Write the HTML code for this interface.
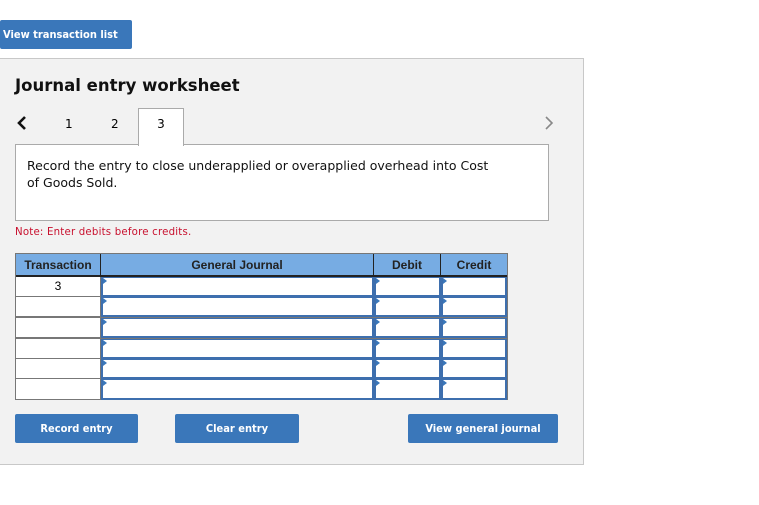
<!DOCTYPE html>
<html><head><style>
*{margin:0;padding:0;box-sizing:border-box}
body{width:759px;height:505px;background:#fff;font-family:"DejaVu Sans",Verdana,sans-serif;position:relative;overflow:hidden}
.a{position:absolute}
.btn{position:absolute;background:#3a77ba;color:#fff;font-weight:bold;font-size:11px;border-radius:2px;text-align:center;font-family:"DejaVu Sans Condensed","DejaVu Sans",sans-serif}
.cell{position:absolute;background:#fff}
.inp{position:absolute;background:#fff;border:2px solid #3e6fae;border-top-width:1px}
.inp:before{content:"";position:absolute;left:0;top:0;border-left:4px solid #3a77ba;border-top:3px solid transparent;border-bottom:3px solid transparent}
.hd{position:absolute;top:254px;height:22px;background:#77ace3;font-family:"Liberation Sans",sans-serif;font-weight:bold;font-size:12px;color:#222;text-align:center;line-height:22px;border-right:1px solid #222}
</style></head><body>
<div class="btn" style="left:0;top:20px;width:132px;height:29px;line-height:29px;text-align:left;padding-left:3px">View transaction list</div>
<div class="a" style="left:-1px;top:58px;width:585px;height:407px;background:#f2f2f2;border:1px solid #c8c8c8"></div>
<div class="a" style="left:15px;top:76px;font-size:16.5px;font-weight:bold;color:#111">Journal entry worksheet</div>
<svg class="a" style="left:16px;top:115px" width="12" height="16"><path d="M9 2 L3 8 L9 14" fill="none" stroke="#111" stroke-width="2.6"/></svg>
<div class="a" style="left:65px;top:117px;font-size:12px">1</div>
<div class="a" style="left:111px;top:117px;font-size:12px">2</div>
<div class="a" style="left:138px;top:108px;width:46px;height:38px;background:#fff;border:1px solid #aaa;border-bottom:none;z-index:2;text-align:center;font-size:12px;line-height:30px">3</div>
<svg class="a" style="left:543px;top:115px" width="12" height="16"><path d="M3 2 L9 8 L3 14" fill="none" stroke="#888" stroke-width="1.6"/></svg>
<div class="a" style="left:15px;top:144px;width:534px;height:77px;background:#fff;border:1px solid #aaa;padding:12px 11px;font-size:12.5px;line-height:17px;color:#111">Record the entry to close underapplied or overapplied overhead into Cost<br>of Goods Sold.</div>
<div class="a" style="left:15px;top:227px;font-size:10.2px;letter-spacing:0.2px;color:#c8102e">Note: Enter debits before credits.</div>
<div class="a" style="left:15px;top:253px;width:493px;height:147px;background:#777;border:1px solid #777"></div>
<div class="hd" style="left:16px;width:85px">Transaction</div>
<div class="hd" style="left:101px;width:273px">General Journal</div>
<div class="hd" style="left:374px;width:67px">Debit</div>
<div class="hd" style="left:441px;width:66px;border-right:none">Credit</div>
<div class="a" style="left:16px;top:275px;width:491px;height:2px;background:#222"></div>
<div class="cell" style="left:16px;top:277px;width:84px;height:19px;text-align:center;font-family:'Liberation Sans',sans-serif;font-size:12px;line-height:19px">3</div>
<div class="cell" style="left:16px;top:297px;width:84px;height:19px"></div>
<div class="cell" style="left:16px;top:318px;width:84px;height:19px"></div>
<div class="cell" style="left:16px;top:339px;width:84px;height:19px"></div>
<div class="cell" style="left:16px;top:359px;width:84px;height:19px"></div>
<div class="cell" style="left:16px;top:379px;width:84px;height:20px"></div>
<div class="inp" style="left:101px;top:277px;width:273px;height:20px"></div><div class="inp" style="left:374px;top:277px;width:67px;height:20px"></div><div class="inp" style="left:441px;top:277px;width:66px;height:20px"></div>
<div class="inp" style="left:101px;top:297px;width:273px;height:20px"></div><div class="inp" style="left:374px;top:297px;width:67px;height:20px"></div><div class="inp" style="left:441px;top:297px;width:66px;height:20px"></div>
<div class="inp" style="left:101px;top:318px;width:273px;height:20px"></div><div class="inp" style="left:374px;top:318px;width:67px;height:20px"></div><div class="inp" style="left:441px;top:318px;width:66px;height:20px"></div>
<div class="inp" style="left:101px;top:339px;width:273px;height:20px"></div><div class="inp" style="left:374px;top:339px;width:67px;height:20px"></div><div class="inp" style="left:441px;top:339px;width:66px;height:20px"></div>
<div class="inp" style="left:101px;top:359px;width:273px;height:20px"></div><div class="inp" style="left:374px;top:359px;width:67px;height:20px"></div><div class="inp" style="left:441px;top:359px;width:66px;height:20px"></div>
<div class="inp" style="left:101px;top:379px;width:273px;height:21px"></div><div class="inp" style="left:374px;top:379px;width:67px;height:21px"></div><div class="inp" style="left:441px;top:379px;width:66px;height:21px"></div>
<div class="btn" style="left:15px;top:414px;width:123px;height:29px;line-height:29px">Record entry</div>
<div class="btn" style="left:175px;top:414px;width:124px;height:29px;line-height:29px">Clear entry</div>
<div class="btn" style="left:408px;top:414px;width:150px;height:29px;line-height:29px">View general journal</div>
</body></html>
